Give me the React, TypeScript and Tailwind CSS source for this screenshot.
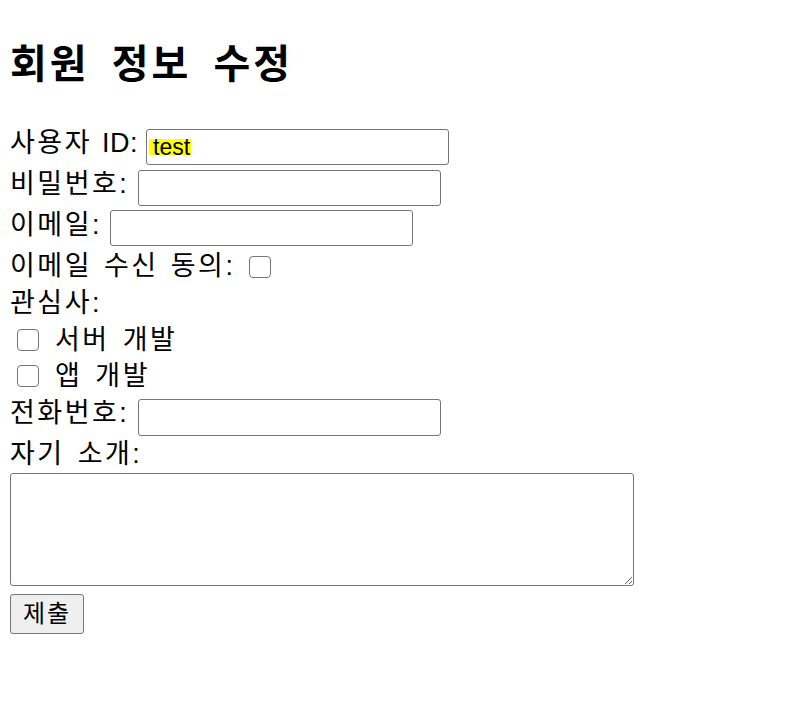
export default function App() {
  return (
    <div className="min-h-screen bg-white px-[10px] text-black font-[Liberation_Sans,Noto_Sans_CJK_KR,sans-serif]">
      {/* Title */}
      <h1 className="pt-[40px] pb-[38px] text-[40px] font-bold leading-[48px] tracking-[3px] [word-spacing:8px]">회원 정보 수정</h1>

      <form className="flex flex-col text-[27px] tracking-[2.5px]">
        {/* 사용자 ID */}
        <div className="flex h-[41px] items-center">
          <span className="pb-[6px] leading-none">
            사용자 <span className="tracking-[0.5px]">ID:</span>
          </span>
          <div className="ml-[8px] flex h-[36px] w-[303px] items-center rounded-[3px] border border-[#767676] px-[2px] text-[23px] tracking-normal">
            <span className="bg-[#ffff00] pl-[4px] pr-[1px] leading-[16px]">test</span>
          </div>
        </div>

        {/* 비밀번호 */}
        <div className="flex h-[41px] items-center">
          <span className="pb-[6px] leading-none">비밀번호:</span>
          <input type="password" className="ml-[9px] h-[36px] w-[303px] rounded-[3px] border border-[#767676]" />
        </div>

        {/* 이메일 */}
        <div className="flex h-[40px] items-center">
          <span className="pb-[6px] leading-none">이메일:</span>
          <input type="email" className="ml-[8px] h-[36px] w-[303px] rounded-[3px] border border-[#767676]" />
        </div>

        {/* 이메일 수신 동의 */}
        <div className="flex h-[37px] items-center">
          <span className="leading-none [word-spacing:2px]">이메일 수신 동의:</span>
          <span className="ml-[14px] h-[22px] w-[22px] rounded-[4px] border-[1.5px] border-[#767676]" />
        </div>

        {/* 관심사 */}
        <div className="flex h-[37px] items-center">
          <span className="leading-none">관심사:</span>
        </div>
        <div className="flex h-[36px] items-center">
          <span className="ml-[7px] h-[22px] w-[22px] rounded-[4px] border-[1.5px] border-[#767676]" />
          <span className="ml-[16px] leading-none [word-spacing:3px]">서버 개발</span>
        </div>
        <div className="flex h-[36px] items-center">
          <span className="ml-[7px] h-[22px] w-[22px] rounded-[4px] border-[1.5px] border-[#767676]" />
          <span className="ml-[16px] leading-none [word-spacing:3px]">앱 개발</span>
        </div>

        {/* 전화번호 */}
        <div className="mt-[2px] flex h-[43px] items-center">
          <span className="pb-[8px] leading-none">전화번호:</span>
          <input type="tel" className="ml-[9px] h-[37px] w-[303px] rounded-[3px] border border-[#767676]" />
        </div>

        {/* 자기 소개 */}
        <div className="flex h-[31px] items-center">
          <span className="leading-none [word-spacing:3px]">자기 소개:</span>
        </div>
        <textarea className="mt-[3px] h-[113px] w-[624px] rounded-[3px] border border-[#767676]" />

        <div className="mt-[7px]">
          <button type="button" className="h-[40px] w-[74px] rounded-[3px] border border-[#767676] bg-[#efefef] text-[24px] leading-none tracking-[2px]">
            제출
          </button>
        </div>
      </form>
    </div>
  );
}
